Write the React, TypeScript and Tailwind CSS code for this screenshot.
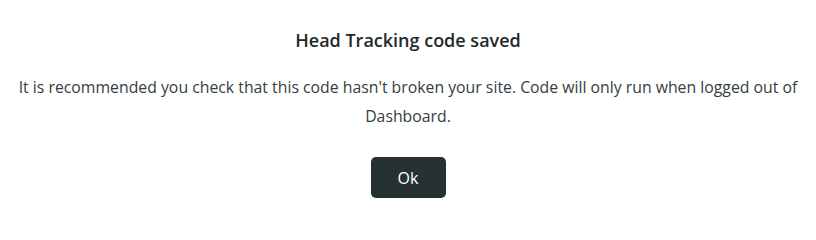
export default function App() {
  return (
    <div className="w-[816px] h-[209px] bg-white flex flex-col items-center pt-[28px] px-2 font-['Open_Sans','Noto_Sans',sans-serif] text-[#2b3436]">
      <h2 className="text-[18px] font-semibold leading-[24px] text-[#22292b]">Head Tracking code saved</h2>
      <p className="mt-[21px] text-[15.8px] leading-[29px] text-center text-[#35403d]">
        It is recommended you check that this code hasn't broken your site. Code will only run when logged out of Dashboard.
      </p>
      <button className="mt-[26px] w-[75px] h-[41px] rounded-[5px] bg-[#273133] text-white text-[16px]">Ok</button>
    </div>
  );
}
